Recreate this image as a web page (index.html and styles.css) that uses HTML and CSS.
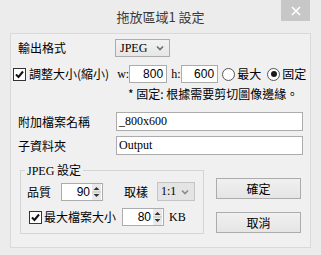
FILE: index.html
```html
<!DOCTYPE html>
<html>
<head>
<meta charset="utf-8">
<link rel="stylesheet" href="styles.css">
</head>
<body>
<div class="window">
  <div class="titlebar">
    <span class="title">拖放區域1 設定</span>
    <div class="close"><svg width="10" height="10" viewBox="0 0 10 10"><path d="M1 1L9 9M9 1L1 9" stroke="#fff" stroke-width="1.6"/></svg></div>
  </div>
  <div class="client">
    <div class="row r1">
      <span class="lbl w97">輸出格式</span>
      <div class="select sel-fmt"><span class="latin">JPEG</span><svg class="chev" width="8" height="6" viewBox="0 0 8 6"><path d="M1 1.5L4 4.5L7 1.5" stroke="#6d6d6d" stroke-width="1.6" fill="none"/></svg></div>
    </div>
    <div class="row r2">
      <span class="check"><svg width="11" height="11" viewBox="0 0 11 11"><path d="M2 5.5L4.5 8L9 2.5" stroke="#111" stroke-width="2" fill="none"/></svg></span>
      <span class="lbl">調整大小(縮小)</span>
      <span class="latin wl">w:</span>
      <div class="input num w38">800</div>
      <span class="latin hl">h:</span>
      <div class="input num w37">600</div>
      <span class="radio r-max"></span><span class="lbl">最大</span>
      <span class="radio r-fix on"></span><span class="lbl">固定</span>
    </div>
    <div class="row note">* 固定: 根據需要剪切圖像邊緣。</div>
    <div class="row r4">
      <span class="lbl w98">附加檔案名稱</span>
      <div class="input text">_800x600</div>
    </div>
    <div class="row r5">
      <span class="lbl w98">子資料夾</span>
      <div class="input text">Output</div>
    </div>
    <div class="bottom">
      <fieldset class="group">
        <legend><span class="latin">JPEG</span> 設定</legend>
        <div class="grow g1">
          <span class="lbl">品質</span>
          <div class="spin sp-q"><span class="val">90</span><span class="arrows"><svg width="9" height="16" viewBox="0 0 9 16"><path d="M1.5 6L4.5 3L7.5 6Z" fill="#333"/><path d="M0 8H9" stroke="#bdbdbd" stroke-width="1"/><path d="M1.5 10L4.5 13L7.5 10Z" fill="#333"/></svg></span></div>
          <span class="lbl smp">取樣</span>
          <div class="select sel-s"><span class="latin">1:1</span><svg class="chev" width="8" height="6" viewBox="0 0 8 6"><path d="M1 1.5L4 4.5L7 1.5" stroke="#8a8a8a" stroke-width="1.6" fill="none"/></svg></div>
        </div>
        <div class="grow g2">
          <span class="check"><svg width="11" height="11" viewBox="0 0 11 11"><path d="M2 5.5L4.5 8L9 2.5" stroke="#111" stroke-width="2" fill="none"/></svg></span>
          <span class="lbl">最大檔案大小</span>
          <div class="spin sp-kb"><span class="val">80</span><span class="arrows"><svg width="9" height="16" viewBox="0 0 9 16"><path d="M1.5 6L4.5 3L7.5 6Z" fill="#333"/><path d="M0 8H9" stroke="#bdbdbd" stroke-width="1"/><path d="M1.5 10L4.5 13L7.5 10Z" fill="#333"/></svg></span></div>
          <span class="latin kb">KB</span>
        </div>
      </fieldset>
      <div class="buttons">
        <div class="btn">確定</div>
        <div class="btn">取消</div>
      </div>
    </div>
  </div>
</div>
</body>
</html>
```
FILE: styles.css
```css
* { box-sizing: border-box; }
html, body { margin: 0; padding: 0; }
body {
  width: 321px;
  height: 255px;
  background: #ececec;
  font-family: "Noto Sans CJK TC", "Noto Sans", sans-serif;
  font-size: 12px;
  color: #000;
  overflow: hidden;
}
.window { width: 321px; height: 255px; }
.titlebar {
  position: relative;
  height: 33px;
  display: flex;
  justify-content: center;
  padding-top: 7px;
}
.title {
  font-size: 13px;
  line-height: 20px;
  color: #3a3a3a;
  padding-left: 0px;
}
.close {
  position: absolute;
  left: 281px;
  top: 0;
  width: 29px;
  height: 21px;
  background: #c7c7c7;
  display: flex;
  align-items: center;
  justify-content: center;
}
.client {
  margin: 0 10px 0 10px;
  height: 215px;
  border: 1px solid #d9d9d9;
  background: #f0f0f0;
}
.row { display: flex; align-items: center; }
.lbl { line-height: 16px; white-space: nowrap; }
.latin { font-family: "Liberation Serif", serif; font-size: 12px; }
.w97 { width: 97px; }
.w98 { width: 98px; }
.r1 { margin-top: 5px; height: 18px; padding-left: 7px; }
.select {
  display: flex;
  align-items: center;
  justify-content: space-between;
  border: 1px solid #acacac;
  background: linear-gradient(#f2f2f2, #e6e6e6);
  padding: 0 5px 0 4px;
}
.sel-fmt { width: 55px; height: 18px; }
.chev { display: block; }
.r2 { margin-top: 8px; height: 18px; padding-left: 2px; }
.check {
  width: 13px;
  height: 13px;
  border: 1px solid #333;
  background: #fff;
  display: flex;
  align-items: center;
  justify-content: center;
  margin-right: 3px;
  flex: none;
}
.input {
  height: 18px;
  border: 1px solid #acacac;
  background: #fff;
  font-family: "Liberation Serif", serif;
  font-size: 12px;
  line-height: 16px;
  padding: 0 3px;
}
.input.num { text-align: right; font-family: "Liberation Sans", sans-serif; font-size: 12px; }
.w38 { width: 38px; }
.w37 { width: 37px; }
.wl { margin-left: 8px; width: 12px; }
.hl { margin-left: 4px; width: 10px; }
.radio {
  width: 13px;
  height: 13px;
  border-radius: 50%;
  border: 1px solid #555;
  background: #fff;
  position: relative;
  margin-right: 2px;
  flex: none;
}
.radio.on::after {
  content: "";
  position: absolute;
  left: 2.5px;
  top: 2.5px;
  width: 6px;
  height: 6px;
  border-radius: 50%;
  background: #1a1a1a;
}
.r-max { margin-left: 4px; }
.r-fix { margin-left: 6px; }
.note { margin-top: 4px; height: 14px; padding-left: 117px; line-height: 14px; }
.r4 { margin-top: 11px; height: 19px; padding-left: 7px; }
.r5 { margin-top: 5px; height: 19px; padding-left: 7px; }
.input.text { width: 187px; height: 19px; line-height: 17px; padding-left: 2px; }
.bottom { display: flex; margin-top: 8px; padding-left: 9px; }
.group {
  margin: 0;
  padding: 0;
  min-width: 0;
  width: 184px;
  height: 71px;
  border: 1px solid #d5d5d5;
}
.group legend {
  padding: 0 2px;
  margin-left: 4px;
  line-height: 14px;
  height: 14px;
}
.grow { display: flex; align-items: center; }
.g1 { margin-top: 5px; height: 19px; padding-left: 6px; }
.g2 { margin-top: 7px; height: 18px; padding-left: 8px; }
.spin {
  display: flex;
  align-items: center;
  height: 18px;
  width: 42px;
  border: 1px solid #acacac;
  background: #fff;
  padding-right: 1px;
}
.spin .val { flex: 1; text-align: right; padding-right: 2px; font-family: "Liberation Sans", sans-serif; line-height: 16px; }
.arrows { display: flex; width: 9px; height: 16px; background: #e9e9e9; }
.arrows svg { display: block; }
.sp-q { margin-left: 10px; }
.smp { margin-left: 21px; }
.sel-s { width: 38px; height: 19px; margin-left: 9px; padding-left: 3px; background: #e4e4e4; border-color: #c4c4c4; }
.g2 .check { margin-right: 2px; }
.sp-kb { margin-left: 6px; }
.kb { margin-left: 5px; }
.buttons { margin-left: 12px; margin-top: 15px; display: flex; flex-direction: column; gap: 13px; }
.btn {
  width: 85px;
  height: 21px;
  border: 1px solid #acacac;
  background: linear-gradient(#f0f0f0, #e5e5e5);
  display: flex;
  align-items: center;
  justify-content: center;
  line-height: 16px;
}
```
